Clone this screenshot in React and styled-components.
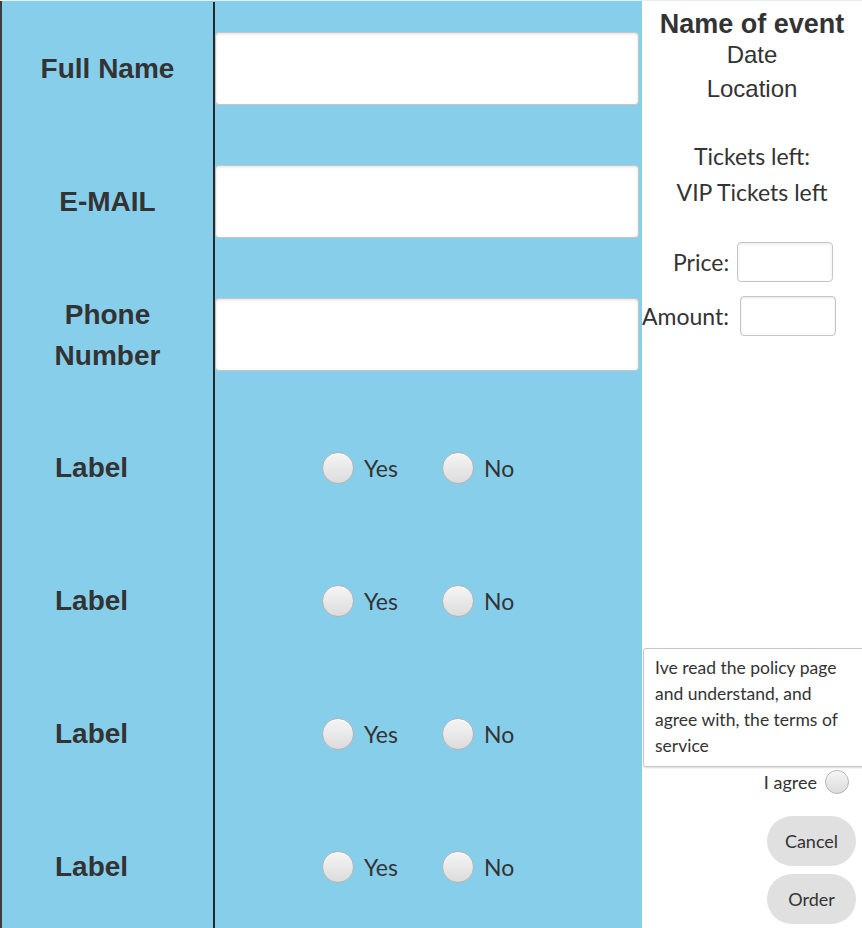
import React from 'react';
import styled, { createGlobalStyle } from 'styled-components';

const GlobalStyle = createGlobalStyle`
	html, body {
		margin: 0;
		padding: 0;
		background: #ffffff;
		overflow: hidden;
	}
	* {
		box-sizing: border-box;
	}
`;

const ui = `'Lato', 'Open Sans', sans-serif`;
const arial = `'Liberation Sans', Arial, sans-serif`;

const Page = styled.div`
	display: flex;
	width: 862px;
	height: 933px;
	border-top: 1px solid #e6eef2;
	overflow: hidden;
`;

const FormPanel = styled.div`
	width: 642px;
	display: grid;
	grid-template-columns: 213px 1fr;
	grid-template-rows: repeat(7, 133px);
	padding-top: 1px;
	background: #87ceeb;
	border-left: 2px solid #3c3c3c;
`;

const LabelCell = styled.div`
	display: flex;
	align-items: center;
	justify-content: ${({ left }) => (left ? 'flex-start' : 'center')};
	padding-left: ${({ left }) => (left ? '53px' : '0')};
	border-right: 2px solid #222a30;
	font-family: ${arial};
	font-weight: bold;
	font-size: 28px;
	line-height: 41px;
	color: #333333;
	text-align: center;
`;

const FieldCell = styled.div`
	display: flex;
	align-items: center;
	padding-right: 3px;
`;

const TextField = styled.div`
	width: 100%;
	height: 73px;
	background: #ffffff;
	border: 1px solid #c6c6c6;
	border-radius: 4px;
	box-shadow: inset 0 1px 3px rgba(0, 0, 0, 0.12);
`;

const RadioCell = styled.div`
	display: flex;
	align-items: center;
	padding-left: 107px;
	gap: 44px;
`;

const RadioOption = styled.label`
	display: flex;
	align-items: center;
	gap: 10px;
	font-family: ${ui};
	font-size: 23px;
	color: #333333;
`;

const RadioDot = styled.span`
	display: inline-block;
	width: ${({ size }) => size}px;
	height: ${({ size }) => size}px;
	border-radius: 50%;
	border: 1px solid #b4b4b4;
	background: linear-gradient(#f5f5f5, #dcdcdc);
	box-shadow: inset 0 1px 0 #ffffff;
`;

const Sidebar = styled.div`
	width: 220px;
	height: 927px;
	display: flex;
	flex-direction: column;
	background: #ffffff;
	padding-top: 9px;
	padding-bottom: 4px;
`;

const Title = styled.div`
	font-family: ${arial};
	font-weight: bold;
	font-size: 27px;
	line-height: 28px;
	color: #333333;
	text-align: center;
`;

const InfoLine = styled.div`
	font-family: ${arial};
	font-size: 24px;
	line-height: 34px;
	color: #333333;
	text-align: center;
`;

const Stats = styled.div`
	margin-top: 32px;
	display: flex;
	flex-direction: column;
	align-items: center;
	font-family: ${ui};
	font-size: 23px;
	line-height: 36px;
	color: #333333;
`;

const InputRows = styled.div`
	margin-top: 32px;
	display: flex;
	flex-direction: column;
	gap: 14px;
`;

const InputRow = styled.div`
	display: flex;
	align-items: center;
	gap: ${({ gap }) => gap}px;
	padding-left: ${({ indent }) => indent}px;
	font-family: ${ui};
	font-size: 23px;
	color: #333333;
`;

const SmallField = styled.div`
	width: 96px;
	height: 40px;
	background: #ffffff;
	border: 1px solid #c6c6c6;
	border-radius: 4px;
	box-shadow: inset 0 1px 3px rgba(0, 0, 0, 0.1);
`;

const PolicyBox = styled.div`
	margin-top: auto;
	margin-left: 1px;
	margin-right: -4px;
	height: 119px;
	padding: 6px 10px 0 11px;
	border: 1px solid #c6c6c6;
	border-radius: 3px;
	box-shadow: 0 1px 2px rgba(0, 0, 0, 0.15);
	font-family: ${ui};
	font-size: 17.5px;
	line-height: 26px;
	color: #333333;
`;

const AgreeRow = styled.div`
	display: flex;
	align-items: center;
	justify-content: flex-end;
	gap: 8px;
	padding-right: 13px;
	margin-top: 3px;
	font-family: ${ui};
	font-size: 18px;
	color: #333333;
`;

const Actions = styled.div`
	display: flex;
	flex-direction: column;
	align-items: flex-end;
	gap: 8px;
	padding-right: 6px;
	margin-top: 22px;
`;

const PillButton = styled.button`
	width: 89px;
	height: 50px;
	border: none;
	border-radius: 25px;
	background: #e0e0e0;
	font-family: ${ui};
	font-size: 18px;
	color: #333333;
	padding: 0;
`;

const textFields = ['Full Name', 'E-MAIL', 'Phone\nNumber'];

const App = () => {
	return (
		<>
			<GlobalStyle />
			<Page>
				<FormPanel>
					{textFields.map((label) => (
						<React.Fragment key={label}>
							<LabelCell>
								<div>
									{label.split('\n').map((line) => (
										<div key={line}>{line}</div>
									))}
								</div>
							</LabelCell>
							<FieldCell>
								<TextField />
							</FieldCell>
						</React.Fragment>
					))}
					{[0, 1, 2, 3].map((i) => (
						<React.Fragment key={i}>
							<LabelCell left>Label</LabelCell>
							<RadioCell>
								<RadioOption>
									<RadioDot size={32} />
									Yes
								</RadioOption>
								<RadioOption>
									<RadioDot size={32} />
									No
								</RadioOption>
							</RadioCell>
						</React.Fragment>
					))}
				</FormPanel>
				<Sidebar>
					<Title>Name of event</Title>
					<InfoLine>Date</InfoLine>
					<InfoLine>Location</InfoLine>
					<Stats>
						<div>Tickets left:</div>
						<div>VIP Tickets left</div>
					</Stats>
					<InputRows>
						<InputRow indent={31} gap={8}>
							Price:
							<SmallField />
						</InputRow>
						<InputRow indent={0} gap={11}>
							Amount:
							<SmallField />
						</InputRow>
					</InputRows>
					<PolicyBox>
						Ive read the policy page and understand, and agree with, the terms of service
					</PolicyBox>
					<AgreeRow>
						I agree
						<RadioDot size={24} />
					</AgreeRow>
					<Actions>
						<PillButton>Cancel</PillButton>
						<PillButton>Order</PillButton>
					</Actions>
				</Sidebar>
			</Page>
		</>
	);
};

export default App;
